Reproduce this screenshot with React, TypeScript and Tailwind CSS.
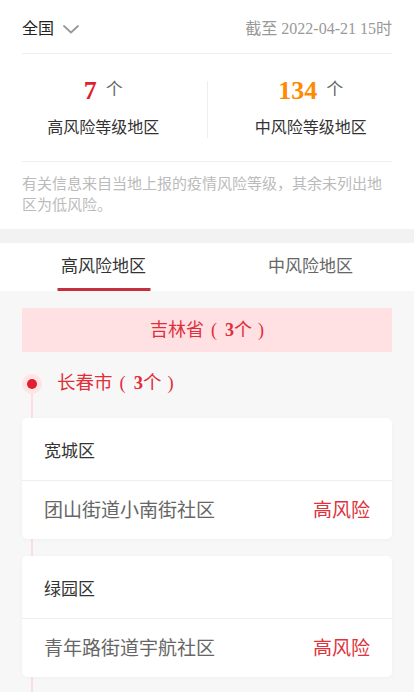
import React from "react";

type Community = { name: string; level: string };
type District = { name: string; items: Community[] };

const districts: District[] = [
  { name: "宽城区", items: [{ name: "团山街道小南街社区", level: "高风险" }] },
  { name: "绿园区", items: [{ name: "青年路街道宇航社区", level: "高风险" }] },
];

function Chevron() {
  return (
    <svg width="16" height="9" viewBox="0 0 16 9" fill="none" className="ml-[9px] mt-[2px]">
      <path d="M1 1l7 6.5L15 1" stroke="#999" strokeWidth="1.8" strokeLinecap="round" strokeLinejoin="round" />
    </svg>
  );
}

function Count({ n }: { n: number }) {
  return (
    <>
      <span className="ml-[7px] mr-[8px]">(</span>
      <b className="font-bold">{n}</b>
      <span>个</span>
      <span className="ml-[6px]">)</span>
    </>
  );
}

export default function App() {
  return (
    <div className="min-h-[692px] bg-[#f7f7f7] font-['Liberation_Serif','Noto_Sans_CJK_SC',serif]">
      {/* Summary */}
      <section className="bg-white">
        <div className="mx-[22px] flex h-[54px] items-center justify-between border-b border-[#eeeeee] pt-[4px]">
          <div className="flex items-center text-[16px] text-[#222]">
            全国
            <Chevron />
          </div>
          <span className="text-[16px] text-[#999]">截至 2022-04-21 15时</span>
        </div>

        <div className="flex pt-[20px]">
          <div className="flex flex-1 flex-col items-center">
            <div className="flex h-[32px] items-center">
              <span className="text-[26px] font-bold text-[#e0202e]">7</span>
              <span className="ml-[9px] text-[17px] text-[#666]">个</span>
            </div>
            <span className="mt-[10px] text-[16px] leading-[24px] text-[#333]">高风险等级地区</span>
          </div>
          <div className="mt-[7px] h-[57px] w-px bg-[#eeeeee]" />
          <div className="flex flex-1 flex-col items-center">
            <div className="flex h-[32px] items-center">
              <span className="text-[26px] font-bold text-[#ff8a00]">134</span>
              <span className="ml-[9px] text-[17px] text-[#666]">个</span>
            </div>
            <span className="mt-[10px] text-[16px] leading-[24px] text-[#333]">中风险等级地区</span>
          </div>
        </div>

        <div className="mx-[22px] mt-[21px] border-t border-[#eeeeee] pb-[13px] pt-[12px]">
          <p className="text-[15px] leading-[21px] text-[#bbbbbb]">
            有关信息来自当地上报的疫情风险等级，其余未列出地区为低风险。
          </p>
        </div>
      </section>

      <div className="h-[14px] bg-[#f2f2f2]" />

      {/* Tabs */}
      <div className="flex h-[48px] bg-white">
        <div className="relative flex flex-1 items-center justify-center text-[17px] text-[#333]">
          高风险地区
          <span className="absolute bottom-0 left-1/2 h-[3px] w-[93px] -translate-x-1/2 bg-[#c4303c]" />
        </div>
        <div className="flex flex-1 items-center justify-center text-[17px] text-[#666]">中风险地区</div>
      </div>

      {/* List */}
      <div className="px-[22px] pt-[17px]">
        <div className="flex h-[44px] items-center justify-center bg-[#ffe0e3] text-[18px] text-[#e02e3a]">
          吉林省
          <Count n={3} />
        </div>

        <div className="relative mt-[15px] pb-[20px]">
          <span className="absolute bottom-0 left-[9px] top-[17px] w-[2px] bg-[#ffdcdf]" />

          <div className="relative flex h-[34px] items-center">
            <span className="flex h-[20px] w-[20px] items-center justify-center rounded-full bg-[#ffe3e5]">
              <span className="h-[10px] w-[10px] rounded-full bg-[#e0202e]" />
            </span>
            <span className="ml-[15px] text-[18.5px] text-[#e02e3a]">
              长春市
              <Count n={3} />
            </span>
          </div>

          <div className="mt-[17px] flex flex-col gap-[17px]">
            {districts.map((d) => (
              <div key={d.name} className="relative rounded-[5px] bg-white shadow-[0_1px_4px_rgba(0,0,0,0.03)]">
                <div className="flex h-[63px] items-center border-b border-[#eeeeee] px-[22px] pt-[6px] text-[17px] text-[#333]">
                  {d.name}
                </div>
                {d.items.map((c) => (
                  <div key={c.name} className="flex h-[58px] items-center justify-between px-[22px] pt-[2px]">
                    <span className="text-[19px] text-[#666]">{c.name}</span>
                    <span className="text-[19px] text-[#e0323c]">{c.level}</span>
                  </div>
                ))}
              </div>
            ))}
          </div>
        </div>
      </div>
    </div>
  );
}
